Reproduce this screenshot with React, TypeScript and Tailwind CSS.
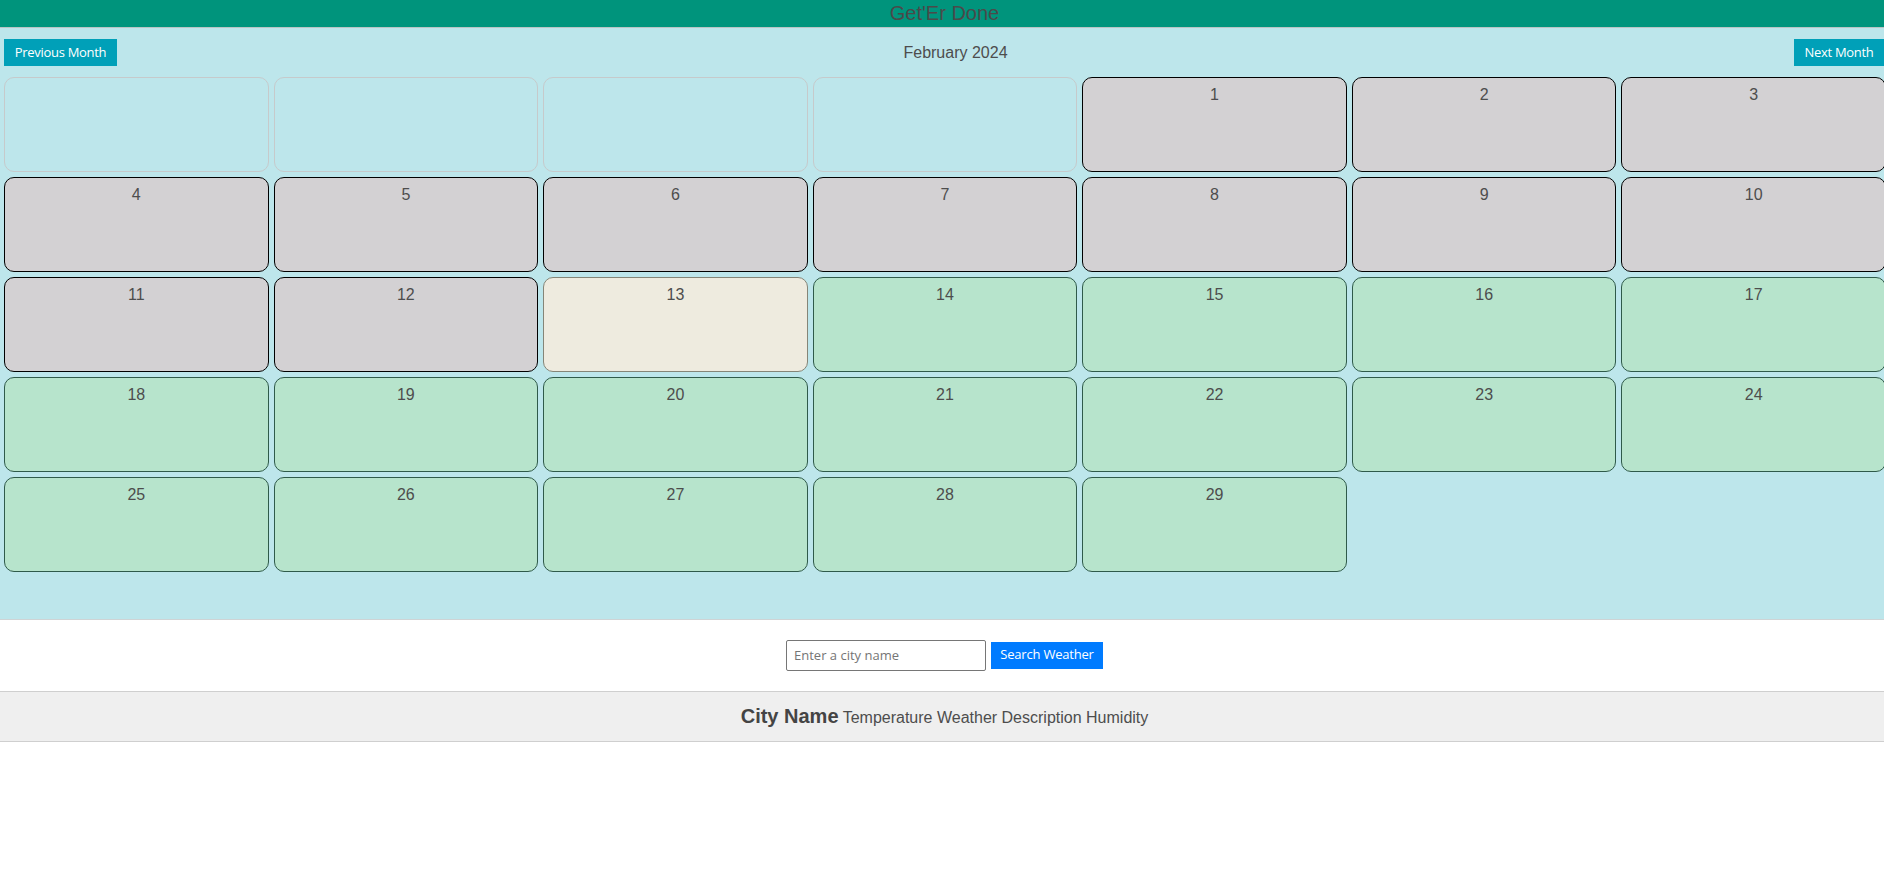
import React from "react";

type Kind = "empty" | "past" | "today" | "future";

const cellClass: Record<Kind, string> = {
  empty: "bg-transparent border-[#c6cacb]",
  past: "bg-[#d3d1d3] border-black",
  today: "bg-[#eeebdf] border-[#858577]",
  future: "bg-[#b7e4cc] border-[#2f5a4a]",
};

export default function App() {
  const cells: { day?: number; kind: Kind }[] = [];
  for (let i = 0; i < 4; i++) cells.push({ kind: "empty" });
  for (let d = 1; d <= 29; d++) {
    cells.push({ day: d, kind: d < 13 ? "past" : d === 13 ? "today" : "future" });
  }

  return (
    <div className="w-[1884px] min-h-[886px] overflow-hidden bg-white">
      <div className="w-[1889px] font-['Liberation_Sans',Arial,sans-serif] text-[#4d4d4d]">
        <header className="h-[28px] bg-[#00947c] border-b border-[#b9c4c4] shadow-[0_1px_2px_rgba(0,0,0,0.15)] flex items-center justify-center">
          <span className="text-[20px] leading-none text-[#4a4a4a] -mt-[1px]">Get'Er Done</span>
        </header>

        <section className="bg-[#bde6eb] pt-[11px] pb-[47px] border-b border-[#cfd4d5]">
          <div className="w-[1884px] flex items-center justify-between pl-[4px]">
            <button className="w-[113px] h-[27px] bg-[#00a0b8] text-white text-[13px] font-['Open_Sans',sans-serif] tracking-[-0.3px] flex items-center justify-center">
              Previous Month
            </button>
            <span className="text-[16px] text-[#4d4d4d]">February 2024</span>
            <button className="w-[90px] h-[27px] bg-[#00a0b8] text-white text-[13px] font-['Open_Sans',sans-serif] tracking-[-0.3px] flex items-center justify-center">
              Next Month
            </button>
          </div>
          <div className="w-[1886px] grid grid-cols-7 gap-x-[5px] gap-y-[5px] pl-[4px] mt-[10.5px]">
            {cells.map((c, i) => (
              <div
                key={i}
                className={`h-[95px] rounded-[10px] border ${cellClass[c.kind]} flex justify-center pt-[7px]`}
              >
                {c.day !== undefined && (
                  <span className="text-[16px] leading-[20px] text-[#4d4d4d]">{c.day}</span>
                )}
              </div>
            ))}
          </div>
        </section>

        <div className="h-[72px] flex items-center justify-center gap-[5px] border-b border-[#cfcfcf]">
          <input
            placeholder="Enter a city name"
            className="w-[200px] h-[31px] border border-[#767676] rounded-[2px] px-[7px] text-[13px] font-['Open_Sans',sans-serif] placeholder:text-[#757575] outline-none"
          />
          <button className="w-[112px] h-[27px] bg-[#007bff] text-white text-[13px] font-['Open_Sans',sans-serif] tracking-[-0.2px] flex items-center justify-center">
            Search Weather
          </button>
        </div>

        <div className="h-[50px] bg-[#efefef] border-b border-[#cfcfcf] flex items-center justify-center">
          <span className="text-[16px] text-[#4d4d4d]">
            <span className="text-[20px] font-bold text-[#444]">City Name</span> Temperature Weather Description Humidity
          </span>
        </div>
      </div>
    </div>
  );
}
